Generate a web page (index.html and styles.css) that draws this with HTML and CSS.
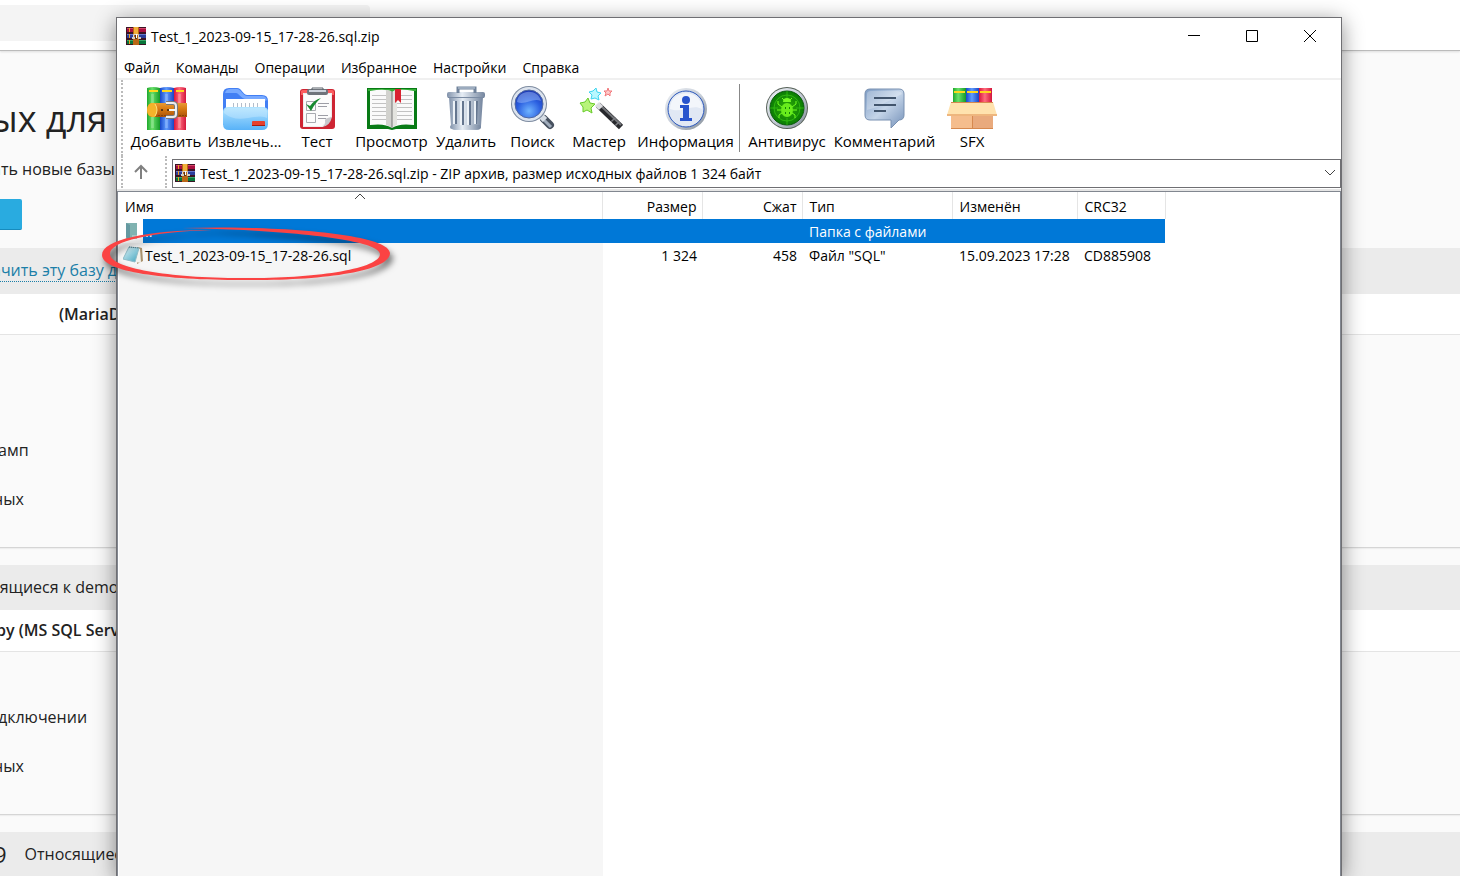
FILE: index.html
```html
<!DOCTYPE html>
<html lang="ru">
<head>
  <meta charset="UTF-8">
  <meta name="viewport" content="width=device-width, initial-scale=1.0">
  <title>Test_1_2023-09-15_17-28-26.sql.zip</title>
  <link rel="stylesheet" href="styles.css">
</head>
<body>
  <!-- shared gradients and the archive icon -->
  <svg class="defs" width="0" height="0" aria-hidden="true">
    <defs>
      <linearGradient id="green" x1="0" x2="1"><stop offset="0" stop-color="#1fa82c"/><stop offset=".4" stop-color="#69e069"/><stop offset="1" stop-color="#149a28"/></linearGradient>
      <linearGradient id="blue" x1="0" x2="1"><stop offset="0" stop-color="#1747c9"/><stop offset=".45" stop-color="#5f9cff"/><stop offset="1" stop-color="#1b45c4"/></linearGradient>
      <linearGradient id="red" x1="0" x2="1"><stop offset="0" stop-color="#d9143c"/><stop offset=".45" stop-color="#ff6c7c"/><stop offset="1" stop-color="#d3163c"/></linearGradient>
      <linearGradient id="belt" x1="0" y1="0" x2="0" y2="1"><stop offset="0" stop-color="#e79a35"/><stop offset=".4" stop-color="#d97c14"/><stop offset="1" stop-color="#a9520a"/></linearGradient>
      <linearGradient id="steel" x1="0" x2="1"><stop offset="0" stop-color="#8293ab"/><stop offset=".4" stop-color="#e6edf5"/><stop offset="1" stop-color="#74859e"/></linearGradient>
      <linearGradient id="folder" x1="0" y1="0" x2="0" y2="1"><stop offset="0" stop-color="#b2e4ff"/><stop offset="1" stop-color="#58b2f8"/></linearGradient>
      <radialGradient id="lens" cx=".5" cy=".75" r=".7"><stop offset="0" stop-color="#6fb4ff"/><stop offset=".6" stop-color="#2b5fe0"/><stop offset="1" stop-color="#1c3bb8"/></radialGradient>
      <linearGradient id="bubble" x1="0" y1="0" x2="1" y2="1"><stop offset="0" stop-color="#7d9cc4"/><stop offset=".5" stop-color="#c5d5e9"/><stop offset="1" stop-color="#7390b8"/></linearGradient>
      <linearGradient id="ring" x1="0" y1="0" x2="1" y2="1"><stop offset="0" stop-color="#eef1f5"/><stop offset=".5" stop-color="#c7ced8"/><stop offset="1" stop-color="#818b96"/></linearGradient>
      <radialGradient id="radar"><stop offset="0" stop-color="#2fae08"/><stop offset="1" stop-color="#0a7c04"/></radialGradient>
      <linearGradient id="pad" x1="0" y1="0" x2="1" y2="1"><stop offset="0" stop-color="#e4f6fa"/><stop offset="1" stop-color="#3fa3bd"/></linearGradient>
    </defs>
    <symbol id="archive" viewBox="0 0 20 18">
      <path fill="#3b1424" d="M0 0h20v18H0z"/>
      <path fill="#a80f3f" d="M1 1h19v4H1z"/><path fill="#d24468" d="M1 1h19v1H1z"/>
      <path fill="#2c3f9c" d="M1 7h19v4H1z"/><path fill="#6678cc" d="M1 7h19v1H1z"/>
      <path fill="#08763b" d="M1 13h19v4H1z"/><path fill="#38a665" d="M1 13h19v1H1z"/>
      <path stroke="#f0a020" d="M3.500 1v4M3.500 7v4M3.500 13v4"/>
      <path fill="#b96816" d="M7 0h6v18H7z"/><path fill="#f2b03a" d="M8 0h4v7H8z"/>
      <path fill="none" stroke="#d8d5cf" d="M7.500 12V7.500h5V12"/>
      <path fill="#5b321b" d="M9 8h2v4H9z"/><path fill="#fff" d="M10 7h1v4h-1z"/>
      <path fill="#d3cfc4" d="M6 10h3v2H6zM12 10h3v2h-3z"/>
    </symbol>
  </svg>

  <main class="page">
    <header class="page-header"><div class="search"></div></header>
    <section class="intro">
      <h1>ых для</h1>
      <p>ать новые базы</p>
      <button class="create" aria-label="Создать"></button>
    </section>
    <section class="database">
      <div class="band"><a href="#">ачить эту базу д</a></div>
      <h2 class="indent">(MariaD</h2>
      <ul>
        <li>амп</li>
        <li>ных</li>
      </ul>
    </section>
    <section class="database second">
      <div class="band">сящиеся к demo</div>
      <h2>ру (MS SQL Serv</h2>
      <ul>
        <li>дключении</li>
        <li>ных</li>
      </ul>
    </section>
    <section class="database last">
      <div class="band"><span class="count">9</span>Относящиес</div>
    </section>
  </main>

  <div class="window">
    <div class="titlebar">
      <svg class="archive-icon"><use href="#archive"/></svg>
      <span class="title">Test_1_2023-09-15_17-28-26.sql.zip</span>
      <button aria-label="Свернуть"><svg width="14" height="14"><path d="M1 6.500h12"/></svg></button>
      <button aria-label="Развернуть"><svg width="14" height="14"><path d="M1.500 1.500h11v11h-11z"/></svg></button>
      <button aria-label="Закрыть"><svg width="14" height="14"><path d="M1 1l12 12M13 1L1 13"/></svg></button>
    </div>

    <nav class="menu">
      <button>Файл</button>
      <button>Команды</button>
      <button>Операции</button>
      <button>Избранное</button>
      <button>Настройки</button>
      <button>Справка</button>
    </nav>

    <div class="toolbar">
      <button>
        <svg viewBox="0 0 48 48">
          <path fill="url(#green)" d="M5 4q6-2 13 0v42H5z"/>
          <path fill="url(#blue)" d="M18 4q7-2 14 0v42H18z"/>
          <path fill="url(#red)" d="M32 4q6-2 12 0v42H32z"/>
          <path fill="#ffd91c" d="M7 6h9v2H7zM20 6h10v2H20zM34 6h8v2h-8z"/>
          <path fill="#fff" fill-opacity=".2" d="M9 10h3v34H9zM23 10h3v34h-3zM36 10h3v34h-3z"/>
          <path fill="url(#belt)" d="M9 19h36v14H9q-4-2-4-7t4-7z"/>
          <path fill="#f5b32a" d="M10 19h3q4 7 0 14h-3q-5-1-5-7t5-7z"/>
          <path fill="none" stroke="#ffe17b" d="M13 20q4 6 0 12"/>
          <path stroke="#8b4309" stroke-dasharray="2 1" d="M16 31.500h28"/>
          <path fill="none" stroke="#77777b" stroke-width="4" d="M24 19h7q3 0 3 3v8q0 3-3 3h-7"/>
          <path fill="none" stroke="#ededee" stroke-width="2" d="M24 19h7q3 0 3 3v8q0 3-3 3h-7"/>
          <path stroke="#f6f6f6" stroke-width="2" d="M27 26h7"/>
          <circle cx="20" cy="26" r="1" fill="#37200c"/><circle cx="26" cy="26" r="1" fill="#37200c"/>
        </svg>
        Добавить
      </button>
      <button>
        <svg viewBox="0 0 48 48">
          <path fill="#427ff4" d="M2 10q0-6 6-6h8c5 0 5 6 10 7h15q6 0 6 6v24H2z"/>
          <path fill="#77a9ff" d="M4 9q1-4 5-4h7c4 0 5 6 10 7h15q4 0 5 4l-2 1-4-2H25c-5 0-7-6-10-6z"/>
          <path fill="#fff" d="M5 15h39v14H5z"/>
          <path stroke="#b4bdca" stroke-width="1" d="M12.500 19v6M16.500 19v6M20.500 19v6M24.500 19v6M28.500 19v6M32.500 19v6M36.500 19v6"/>
          <path fill="url(#folder)" d="M2 27q1-4 5-4h36q4 1 4 4v13q0 6-6 6H8q-6 0-6-6z"/>
          <path fill="#d9f2ff" fill-opacity=".35" d="M3 29q9 8 24 5t19 0v-7q-1-3-4-3H7q-4 1-4 5z"/>
          <rect x="31" y="37" width="13" height="5" rx="1" fill="#e6402d"/><path stroke="#a71b0e" d="M31 41.500h13"/>
        </svg>
        Извлечь...
      </button>
      <button>
        <svg viewBox="0 0 48 48">
          <rect x="7" y="5" width="35" height="40" rx="3" fill="#ce2533"/>
          <path fill="#fb5e60" d="M8 7q1-1 2-1h29q2 0 2 2v3H8z"/>
          <path fill="#ededed" d="M10 9h29v24l-9 10H10z"/>
          <path fill="#fcfcfc" d="M11 10h27v22l-9 10H11z"/>
          <path fill="#c8c8cc" d="M39 33q-8 1-7 4 1 4-3 6 8-1 10-10z"/>
          <rect x="14" y="5" width="21" height="6" rx="2" fill="#6f747b"/><path stroke="#cdd3dc" stroke-width="2" d="M16 7h17"/>
          <path fill="none" stroke="#596068" stroke-width="1" d="M19 6V4h11v2"/>
          <path fill="none" stroke="#a8aab0" d="M13.500 17.500h9v9h-9zM13.500 29.500h9v9h-9z"/>
          <path stroke="#9d9ea6" d="M25 19.500h11M25 22.500h9M25 31.500h10M25 34.500h8"/>
          <path fill="#178a30" d="M13 20l4 2q4-6 11-8-6 5-10 13z"/>
        </svg>
        Тест
      </button>
      <button>
        <svg class="wide" viewBox="0 0 52 48">
          <path fill="#087a15" d="M1 4h50v41H30l-4 1-4-1H1z"/><path fill="#32ae35" d="M2 5h48v2H2z"/>
          <path fill="#fafafa" d="M4 7q16-3 22 1 6-4 22-1v34q-15-2-22 3-7-5-22-3z"/>
          <path fill="#d2d2ce" d="M20 6q5 0 6 2v36q-2-2-6-3z"/><path fill="#e4e4df" d="M26 8q2-2 5-2v35q-3 1-5 3z"/>
          <path stroke="#777" d="M26 8v36"/>
          <path fill="none" stroke="#c2c2c2" d="M6 11.500h14M6 15.500h14M6 19.500h14M6 23.500h14M6 27.500h14M6 31.500h14M6 35.500h14M31 11.500h15M31 15.500h15M31 19.500h15M31 23.500h15M31 27.500h15M31 31.500h15M31 35.500h15"/>
          <path fill="#d9222f" d="M29 5h6v14l-3-3-3 3z"/>
        </svg>
        Просмотр
      </button>
      <button>
        <svg viewBox="0 0 48 48">
          <path fill="url(#steel)" d="M7 13h34l-2 29q0 4-4 4H13q-4 0-4-4z"/>
          <path stroke="#65768f" stroke-width="2" d="M14 17v23M21 17v24M28 17v24M35 17l-1 23"/>
          <path stroke="#edf2f7" stroke-width="2" d="M12 17v23M19 17v24M26 17v24M33 17v23"/>
          <rect x="8" y="41" width="31" height="4" rx="2" fill="url(#steel)"/>
          <rect x="5" y="8" width="38" height="6" rx="2" fill="url(#steel)"/><path stroke="#7a8ba3" d="M6 13.500h36"/>
          <path fill="none" stroke="#71839b" stroke-width="3" d="M16 9V4h17v5"/><path stroke="#c6d2e0" d="M16 4h17"/>
        </svg>
        Удалить
      </button>
      <button>
        <svg viewBox="0 0 48 48">
          <path stroke="#47515f" stroke-width="8" stroke-linecap="round" d="M35 35l6 6"/><path stroke="#a0acbb" stroke-width="3" d="M33 34l9 9"/>
          <path stroke="#d6dde5" stroke-width="6" d="M31 31l5 5"/>
          <circle cx="20" cy="20" r="18" fill="#7d8ba0"/><circle cx="20" cy="20" r="17" fill="#dce3ed"/>
          <circle cx="20" cy="20" r="14" fill="url(#lens)" stroke="#5068a0"/>
          <path fill="#b6d2ff" fill-opacity=".4" d="M8 18c1-13 21-14 24-1-8-4-16 5-24 1z"/>
        </svg>
        Поиск
      </button>
      <button>
        <svg viewBox="0 0 48 48">
          <path stroke="#27282c" stroke-width="6" d="M23 21l23 22"/><path stroke="#737579" stroke-width="2" d="M24 20l22 21"/>
          <path stroke="#dddde1" stroke-width="6" d="M22 20l4 4"/>
          <path stroke="#7d7f84" stroke-width="6" d="M38 35l1 1M42 39l1 1"/>
          <path fill="#b8f47a" stroke="#68cb2a" d="M13 14l2 5 5 1-4 4 1 5-5-3-4 2v-5l-3-4 5-1z"/>
          <path fill="#b8f8ff" stroke="#3ed5ef" d="M21 4l1 4 4 1-3 3 1 4-4-2-4 1 1-4-3-3 4-1z"/>
          <path fill="#ffc9c9" stroke="#f1797c" d="M33 4l1 3h3l-2 2v3l-2-2-3 2 1-3-2-2h3z"/>
        </svg>
        Мастер
      </button>
      <button>
        <svg viewBox="0 0 48 48">
          <circle cx="24" cy="25" r="21" fill="url(#ring)"/><circle cx="24" cy="25" r="18" fill="#e1e8f4" stroke="#2855ba" stroke-width="1"/>
          <path fill="#fff" fill-opacity=".6" d="M8 25c0-21 32-21 32 0-10-6-20 5-32 0z"/>
          <circle cx="24" cy="16" r="4" fill="#2854cd"/><path fill="#2854cd" d="M18 21h9v13h3v3H18v-3h3V24h-3z"/>
        </svg>
        Информация
      </button>
      <span class="separator"></span>
      <button>
        <svg viewBox="0 0 48 48">
          <circle cx="24" cy="24" r="21" fill="#566158"/><circle cx="24" cy="24" r="20" fill="url(#ring)"/><circle cx="24" cy="24" r="17" fill="url(#radar)" stroke="#08580b"/>
          <g fill="none" stroke="#39c915" stroke-opacity=".7"><circle cx="24" cy="24" r="13"/><path d="M24 7v8M24 34v7M7 24h8M33 24h8"/></g>
          <g fill="none" stroke="#72ff20"><path d="M19 23l-4-3v-3M29 23l4-3v-3M18 26h-4M30 26h4M19 29l-3 2v3M29 29l3 2v3M21 16l-2-2M27 16l2-2"/></g>
          <ellipse cx="24" cy="26" rx="6" ry="7" fill="#68ec1c"/><path fill="#74fa25" d="M20 18q0-4 4-4t4 4z"/>
          <path fill="#128509" d="M22 23h1v2h-1zM26 23h1v2h-1zM22 28h1v2h-1zM26 28h1v2h-1z"/>
        </svg>
        Антивирус
      </button>
      <button>
        <svg viewBox="0 0 48 48">
          <path fill="url(#bubble)" stroke="#7890b1" d="M9 5h29q5 0 5 5v21q0 5-5 5l-8 8v-8H9q-5 0-5-5V10q0-5 5-5z"/>
          <path fill="#fff" fill-opacity=".25" d="M6 10q0-3 4-3h26q4 0 5 3L16 23 6 26z"/>
          <path stroke="#42556d" stroke-width="2" d="M13 14h22M13 21h22M13 27h12"/>
        </svg>
        Комментарий
      </button>
      <button>
        <svg class="wide" viewBox="0 0 52 48">
          <path fill="url(#green)" d="M7 4h13v16H7z"/><path fill="url(#blue)" d="M20 4h13v16H20z"/><path fill="url(#red)" d="M33 4h13v16H33z"/>
          <path fill="#ffd71b" d="M8 7h11v2H8zM21 7h11v2H21zM34 7h11v2H34z"/>
          <path fill="#f5bd8d" d="M5 19h42v26H5z"/><path fill="#e9aa7d" d="M26 30h21v15H26z"/>
          <path fill="#ffe2ae" d="M5 18h42l4 13H1z"/>
          <path fill="#eeb67e" d="M1 30h50v2H1z"/>
          <path fill="none" stroke="#d6894f" d="M5 18.500h42M26.500 32v13M5 44.500h42"/>
        </svg>
        SFX
      </button>
    </div>

    <div class="address">
      <button class="up" aria-label="Вверх"><svg width="16" height="16"><path d="M8 15V2M2 8l6-6 6 6"/></svg></button>
      <div class="path">
        <svg class="archive-icon"><use href="#archive"/></svg>
        <select aria-label="Путь">
          <option>Test_1_2023-09-15_17-28-26.sql.zip - ZIP архив, размер исходных файлов 1 324 байт</option>
        </select>
        <svg class="chevron" width="10" height="6"><path d="M0 0l5 5 5-5"/></svg>
      </div>
    </div>

    <div class="files">
      <table>
        <colgroup>
          <col class="c-name"><col class="c-size"><col class="c-size"><col class="c-type"><col class="c-date"><col class="c-crc">
        </colgroup>
        <thead>
          <tr>
            <th class="sorted">Имя<svg width="10" height="6"><path d="M0 5l5-5 5 5"/></svg></th>
            <th class="num">Размер</th>
            <th class="num">Сжат</th>
            <th>Тип</th>
            <th>Изменён</th>
            <th>CRC32</th>
          </tr>
        </thead>
        <tbody>
          <tr class="selected">
            <td class="name">
              <div>
                <svg class="file-icon" viewBox="0 0 20 20"><path fill="#80b3b1" d="M3 2h11v16H3z"/><path fill="#6599a1" d="M3 2l4 2v15l-4-3z"/><path fill="#a6c9c6" d="M9 14h5v4H9z"/></svg>
                <span>..</span>
              </div>
            </td>
            <td></td><td></td>
            <td>Папка с файлами</td>
            <td></td><td></td>
          </tr>
          <tr>
            <td class="name">
              <div>
                <svg class="file-icon" viewBox="0 0 20 20"><path fill="#a9926d" d="M15 2l4 1 1 13-6 3z"/><path fill="#f3f3ee" d="M14 3l3 1 1 14-6-1z"/><path fill="url(#pad)" stroke="#8dbbc6" d="M6 2l10 1-4 14-12-3z"/><path stroke="#557989" stroke-dasharray="1 1" d="M6 2l10 1"/></svg>
                <span>Test_1_2023-09-15_17-28-26.sql</span>
              </div>
            </td>
            <td class="num">1 324</td>
            <td class="num">458</td>
            <td>Файл "SQL"</td>
            <td>15.09.2023 17:28</td>
            <td>CD885908</td>
          </tr>
        </tbody>
      </table>
    </div>
  </div>

  <!-- hand-drawn mark around the dump file -->
  <svg class="mark" viewBox="0 0 300 70" aria-hidden="true">
    <path fill="#fb4343" fill-rule="evenodd" d="M83 8C190 5 291 15 291 33C291 52 220 61 143 60C66 60 3 52 3 35C3 20 48 10 113 10C52 12 11 21 11 34C11 48 69 58 143 58C214 59 281 49 281 34C281 20 191 10 83 8z"/>
  </svg>
</body>
</html>
```

FILE: styles.css
```css
* {
  box-sizing: border-box;
}

body {
  margin: 0;
  height: 100vh;
  position: relative;
  overflow: hidden;
  background: #fafafa;
  color: #222;
  font: 16px/24px "Open Sans", sans-serif;
}

button {
  border: 0;
  padding: 0;
  background: none;
  color: inherit;
  font: inherit;
}

svg {
  display: block;
  flex: none;
  fill: none;
}

.defs {
  position: absolute;
}

/* page behind the window */
.page {
  height: 100vh;
  overflow: hidden;
}

.page-header {
  height: 51px;
  padding-top: 5px;
  background: #fff;
  border-bottom: 1px solid #bbb;
  box-shadow: 0 1px 2px #ddd;
}

.search {
  width: 370px;
  height: 36px;
  background: #f4f4f4;
  border-radius: 0 4px 4px 0;
}

.intro {
  height: 197px;
  padding-top: 44px;
}

.intro h1 {
  margin: 0 0 14px -10px;
  font-size: 36px;
  line-height: 48px;
  font-weight: 400;
}

.intro p {
  margin: 0 0 18px -8px;
}

.create {
  display: block;
  width: 22px;
  height: 31px;
  background: #29abe0;
  border-bottom: 1px solid #178bbd;
  border-radius: 0 2px 2px 0;
}

.database {
  height: 300px;
  margin-bottom: 17px;
  border-bottom: 1px solid #d5d5d5;
  box-shadow: 0 1px 1px #eee;
  white-space: nowrap;
}

.database.second {
  height: 250px;
}

.band {
  height: 46px;
  padding-top: 10px;
  background: #ebebeb;
  text-indent: -8px;
}

.second .band,
.second h2 {
  height: 45px;
}

.last .band {
  display: flex;
  text-indent: 0;
}

.band a {
  color: #1b7fa8;
  text-decoration: none;
  border-bottom: 1px dotted #1b7fa8;
}

.count {
  margin: 0 18px 0 -6px;
  font-size: 22px;
}

.database h2 {
  height: 41px;
  margin: 0;
  padding-top: 8px;
  background: #fff;
  border-bottom: 1px solid #e4e4e4;
  font-size: 16px;
  line-height: 24px;
  font-weight: 600;
}

.database h2.indent {
  padding-left: 59px;
}

.database.second h2 {
  height: 42px;
  text-indent: -4px;
}

.database ul {
  display: grid;
  gap: 25px;
  margin: 0 0 0 -2px;
  padding: 103px 0 0;
  list-style: none;
}

.database li:last-child {
  text-indent: -5px;
}

.second ul {
  padding-top: 53px;
}

/* archive window */
.window {
  position: absolute;
  top: 17px;
  right: 118px;
  bottom: 0;
  left: 116px;
  display: flex;
  flex-direction: column;
  background: #fff;
  border: 1px solid #6f6f73;
  border-bottom: 0;
  box-shadow: 0 4px 20px rgba(0, 0, 0, .45);
  color: #000;
  font: 14px/20px "Open Sans", sans-serif;
}

.titlebar {
  display: flex;
  align-items: center;
  height: 36px;
  padding: 0 2px 0 9px;
}

.archive-icon {
  width: 20px;
  height: 18px;
}

.title {
  flex: 1;
  margin-left: 5px;
  padding-top: 2px;
}

.titlebar button {
  display: flex;
  align-items: center;
  justify-content: center;
  width: 58px;
  height: 36px;
  stroke: #000;
}

.menu {
  display: flex;
  gap: 16px;
  height: 26px;
  padding: 4px 7px 0;
  border-bottom: 2px solid #f0f0f0;
}

.toolbar {
  display: grid;
  grid-template-columns: 78px 79px 66px 83px 66px 67px 66px 107px 1px 94px 101px 74px;
  height: 76px;
  margin-left: 4px;
  padding: 4px 0 0 4px;
  border-left: 2px dotted #bbb;
  font-size: 15px;
}

.toolbar button {
  display: flex;
  flex-direction: column;
  align-items: center;
  justify-content: flex-start;
  white-space: nowrap;
}

.toolbar svg {
  width: 48px;
  height: 48px;
  margin-bottom: -1px;
}

.toolbar svg.wide {
  width: 52px;
}

.separator {
  height: 68px;
  background: #888;
}

.address {
  display: flex;
  height: 32px;
  margin-left: 4px;
  border-left: 2px dotted #bbb;
}

.up {
  width: 44px;
  padding-left: 10px;
  border-right: 2px dotted #bbb;
  stroke: #808080;
  stroke-width: 2;
}

.path {
  display: flex;
  flex: 1;
  align-items: center;
  height: 29px;
  margin: 3px 0 0 5px;
  padding: 0 5px 1px 2px;
  border: 1px solid #6f6f73;
}

.path select {
  flex: 1;
  min-width: 0;
  padding: 2px 0 0 5px;
  appearance: none;
  border: 0;
  background: none;
  color: inherit;
  font: inherit;
}

.chevron,
.sorted svg {
  stroke: #444;
}

.files {
  flex: 1;
  margin-top: 3px;
  border: 1px solid #828790;
  border-width: 1px 1px 0;
  background: linear-gradient(#f6f6f6, #f6f6f6) no-repeat 1px 0 / 484px 100%;
  box-shadow: 0 -2px #e5e5e5;
}

table {
  width: 1047px;
  table-layout: fixed;
  border-collapse: collapse;
}

.c-name {
  width: 484px;
}

.c-size {
  width: 100px;
}

.c-type {
  width: 150px;
}

.c-date {
  width: 125px;
}

.c-crc {
  width: 88px;
}

thead {
  background: #fff;
}

th {
  height: 27px;
  padding: 2px 5px 0 7px;
  border-right: 1px solid #e5e5e5;
  font-weight: 400;
  text-align: left;
  white-space: nowrap;
}

.sorted {
  position: relative;
}

.sorted svg {
  position: absolute;
  top: 2px;
  left: 49%;
}

td {
  height: 24px;
  padding: 2px 5px 0 7px;
  white-space: nowrap;
}

.num {
  text-align: right;
}

td.name {
  padding: 0 0 0 5px;
}

.name div {
  display: flex;
  align-items: center;
  height: 24px;
}

.file-icon {
  width: 20px;
  height: 20px;
}

.name span {
  height: 24px;
  padding: 3px 0 0 2px;
}

.selected td {
  background: #0078d7;
  color: #fff;
}

.selected td.name {
  background: #fff;
}

.selected .name span {
  flex: 1;
  background: #0078d7;
}

.mark {
  position: absolute;
  top: 220px;
  left: 99px;
  width: 300px;
  height: 70px;
  filter: drop-shadow(3px 5px 3px rgba(0, 0, 0, .5));
  pointer-events: none;
}
```
